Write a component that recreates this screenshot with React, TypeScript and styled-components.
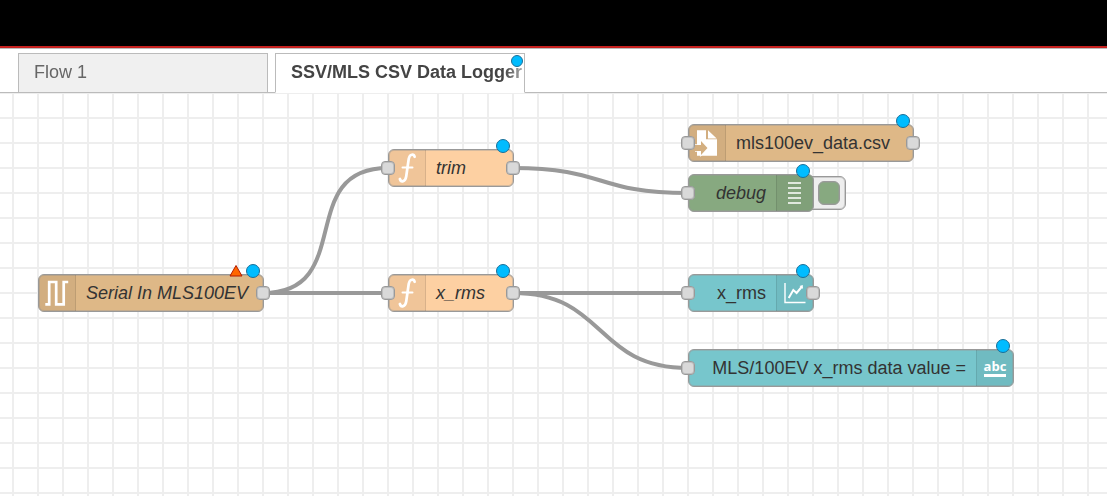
import React from "react";
import styled, { createGlobalStyle } from "styled-components";

const GlobalStyle = createGlobalStyle`
  * { box-sizing: border-box; }
  body {
    margin: 0;
    background: #fff;
    font-family: "Liberation Sans", Arial, Helvetica, sans-serif;
    font-size: 18px;
    line-height: 24px;
  }
`;

const Editor = styled.div`
  display: flex;
  flex-direction: column;
  min-height: 100vh;
`;

const Header = styled.header`
  height: 48px;
  background: #000;
  border-bottom: 2px solid #c7211f;
`;

const TabBar = styled.nav`
  display: flex;
  gap: 7px;
  height: 45px;
  padding: 4px 18px 0;
  border-top: 1px solid #bbb;
  box-shadow: inset 0 -1px #bbb;
`;

const Tab = styled.a<{ $active?: boolean }>`
  position: relative;
  flex: 0 1 250px;
  min-width: 0;
  padding: 6px 0 0 15px;
  border: 1px solid #bbb;
  border-bottom-color: ${(p) => (p.$active ? "#fff" : "#bbb")};
  background: ${(p) => (p.$active ? "#fff" : "#f0f0f0")};
  color: ${(p) => (p.$active ? "#444" : "#666")};
  font-weight: ${(p) => (p.$active ? "bold" : "normal")};
  text-decoration: none;
`;

const TabLabel = styled.span`
  display: block;
  white-space: nowrap;
  mask-image: linear-gradient(to left, rgba(0, 0, 0, 0.4), #000 20px);
`;

const Canvas = styled.main`
  position: relative;
  flex: 1;
  overflow: hidden;
  background-color: #fff;
  background-image: linear-gradient(#eee 2px, transparent 2px),
    linear-gradient(90deg, #eee 2px, transparent 2px);
  background-size: 25px 25px;
  background-position: 12px 24px;
`;

const Wires = styled.svg`
  position: absolute;
  inset: 0;
  width: 100%;
  height: 100%;
  fill: none;
  stroke: #999;
  stroke-width: 4;
`;

const NodeBox = styled.article<{ $x: number; $y: number; $w: number }>`
  position: absolute;
  left: ${(p) => p.$x}px;
  top: ${(p) => p.$y}px;
  width: ${(p) => p.$w}px;
  height: 38px;
`;

const NodeBody = styled.div<{ $color: string; $right?: boolean; $italic?: boolean }>`
  position: relative;
  display: flex;
  flex-direction: ${(p) => (p.$right ? "row-reverse" : "row")};
  align-items: stretch;
  height: 100%;
  border: 1px solid #999;
  border-radius: 6px;
  box-shadow: inset 0 0 0 1px rgba(153, 153, 153, 0.4);
  background: ${(p) => p.$color};
  color: #333;
  font-style: ${(p) => (p.$italic ? "italic" : "normal")};
`;

const NodeIcon = styled.span<{ $right?: boolean }>`
  display: flex;
  flex: none;
  align-items: center;
  justify-content: center;
  width: 37px;
  background: rgba(0, 0, 0, 0.05);
  border: 0 solid rgba(0, 0, 0, 0.1);
  border-width: ${(p) => (p.$right ? "0 0 0 1px" : "0 1px 0 0")};
  border-radius: ${(p) => (p.$right ? "0 5px 5px 0" : "5px 0 0 5px")};
`;

const NodeLabel = styled.span<{ $right?: boolean }>`
  flex: 1;
  display: flex;
  align-items: center;
  justify-content: ${(p) => (p.$right ? "flex-end" : "flex-start")};
  padding: 0 10px;
  white-space: nowrap;
`;

const Port = styled.span<{ $side: "left" | "right" }>`
  position: absolute;
  top: 12px;
  ${(p) => (p.$side === "left" ? "left: -7px" : "right: -6px")};
  width: 14px;
  height: 14px;
  border: 1px solid #999;
  border-radius: 4px;
  box-shadow: inset 0 0 0 1px rgba(153, 153, 153, 0.4);
  background: #d9d9d9;
`;

const Changed = styled.span<{ $tab?: boolean }>`
  position: absolute;
  top: ${(p) => (p.$tab ? "1px" : "-10px")};
  right: ${(p) => (p.$tab ? "1px" : "4px")};
  width: ${(p) => (p.$tab ? "12px" : "14px")};
  height: ${(p) => (p.$tab ? "12px" : "14px")};
  border: 1px solid #1a6f98;
  border-radius: 50%;
  background: #00bcff;
`;

const ErrorMark = styled.svg`
  position: absolute;
  top: -10px;
  right: 21px;
  width: 14px;
  height: 13px;
`;

const DebugToggle = styled.button`
  position: absolute;
  top: 2px;
  right: -32px;
  display: flex;
  align-items: center;
  justify-content: flex-end;
  width: 44px;
  height: 34px;
  padding: 0 5px;
  border: 1px solid #999;
  border-radius: 6px;
  background: #eee;
  box-shadow: inset 0 0 0 1px rgba(153, 153, 153, 0.4);
`;

const DebugLamp = styled.span`
  width: 22px;
  height: 24px;
  border: 1px solid #999;
  border-radius: 6px;
  box-shadow: inset 0 0 0 1px rgba(153, 153, 153, 0.4);
  background: #87a980;
`;

const AbcIcon = styled.span`
  padding-bottom: 1px;
  border-bottom: 3px solid #fff;
  color: #fff;
  font: bold 13px/14px "Open Sans", sans-serif;
`;

const SerialIcon = () => (
  <svg width="24" height="28" viewBox="0 0 24 28" fill="none" stroke="#fff" strokeWidth="2.700">
    <path d="M0.300 25.300H4.200V3H11.200V25.300H18.700V3H23.200" />
  </svg>
);

const FunctionIcon = () => (
  <svg width="20" height="30" viewBox="0 0 20 30" fill="none" stroke="#fff" strokeLinecap="round">
    <path
      d="M17.600 3.800C17 1.200 12.800 0.200 11.700 6L9.200 23.500C8.300 29 4 29.600 2.900 26"
      strokeWidth="2.700"
    />
    <path d="M5.500 14.500H15.500" strokeWidth="2" />
  </svg>
);

const FileIcon = () => (
  <svg width="24" height="28" viewBox="0 0 24 28">
    <path d="M2 1.300H11V10.300H22V26.700H2Z" fill="#fff" />
    <path d="M13 1.300L21.700 9.500H13Z" fill="#fff" />
    <path
      d="M0 16H6V12L12.500 19L6 26V22H0Z"
      fill="#d3af80"
      stroke="#fff"
      strokeWidth="1.500"
      paintOrder="stroke"
    />
  </svg>
);

const ListIcon = () => (
  <svg width="14" height="24" viewBox="0 0 14 24" stroke="#fff" strokeWidth="1.400">
    <path d="M0 2H13M0 7H13M0 12H13M0 17H13M0 22H13" />
  </svg>
);

const ChartIcon = () => (
  <svg width="22" height="22" viewBox="0 0 22 22" fill="none" stroke="#fff">
    <path d="M1 1V20.500H21.500" strokeWidth="1.400" />
    <path d="M4.700 16L9.300 8L12.600 11L18 4.500" strokeWidth="2" />
    <path d="M18.800 3V7L15.500 4Z" fill="#fff" stroke="none" />
  </svg>
);

type NodeSpec = {
  id: string;
  label: string;
  x: number;
  y: number;
  w: number;
  color: string;
  icon: React.ReactNode;
  iconRight?: boolean;
  italic?: boolean;
  input?: boolean;
  output?: boolean;
  error?: boolean;
  toggle?: boolean;
};

const nodes: NodeSpec[] = [
  { id: "serial", label: "Serial In MLS100EV", x: 38, y: 181, w: 226, color: "#deb887", icon: <SerialIcon />, italic: true, output: true, error: true },
  { id: "trim", label: "trim", x: 388, y: 56, w: 126, color: "#fdd0a2", icon: <FunctionIcon />, italic: true, input: true, output: true },
  { id: "rms", label: "x_rms", x: 388, y: 181, w: 126, color: "#fdd0a2", icon: <FunctionIcon />, italic: true, input: true, output: true },
  { id: "file", label: "mls100ev_data.csv", x: 688, y: 31, w: 226, color: "#deb887", icon: <FileIcon />, input: true, output: true },
  { id: "debug", label: "debug", x: 688, y: 81, w: 126, color: "#87a980", icon: <ListIcon />, iconRight: true, italic: true, input: true, toggle: true },
  { id: "chart", label: "x_rms", x: 688, y: 181, w: 126, color: "#77c6cc", icon: <ChartIcon />, iconRight: true, input: true, output: true },
  { id: "text", label: "MLS/100EV x_rms data value =", x: 688, y: 256, w: 326, color: "#77c6cc", icon: <AbcIcon>abc</AbcIcon>, iconRight: true, input: true },
];

const FlowNode = ({ node }: { node: NodeSpec }) => (
  <NodeBox $x={node.x} $y={node.y} $w={node.w}>
    {node.toggle && (
      <DebugToggle type="button" aria-label="Toggle debug output">
        <DebugLamp />
      </DebugToggle>
    )}
    <NodeBody $color={node.color} $right={node.iconRight} $italic={node.italic}>
      <NodeIcon $right={node.iconRight}>{node.icon}</NodeIcon>
      <NodeLabel $right={node.iconRight}>{node.label}</NodeLabel>
    </NodeBody>
    {node.input && <Port $side="left" />}
    {node.output && <Port $side="right" />}
    {node.error && (
      <ErrorMark viewBox="0 0 14 13">
        <path d="M1 12H13L7 1.500Z" fill="#ff6600" stroke="#b31b00" />
      </ErrorMark>
    )}
    <Changed />
  </NodeBox>
);

export default function App() {
  return (
    <Editor>
      <GlobalStyle />
      <Header />
      <TabBar>
        <Tab href="#flow-1">
          <TabLabel>Flow 1</TabLabel>
        </Tab>
        <Tab href="#data-logger" $active>
          <TabLabel>SSV/MLS CSV Data Logger</TabLabel>
          <Changed $tab />
        </Tab>
      </TabBar>
      <Canvas>
        <Wires>
          <path d="M263 200C357 200 294 75 388 75" />
          <path d="M263 200H388" />
          <path d="M513 75C607 75 594 100 688 100" />
          <path d="M513 200H688" />
          <path d="M513 200C607 200 594 275 688 275" />
        </Wires>
        {nodes.map((node) => (
          <FlowNode key={node.id} node={node} />
        ))}
      </Canvas>
    </Editor>
  );
}
